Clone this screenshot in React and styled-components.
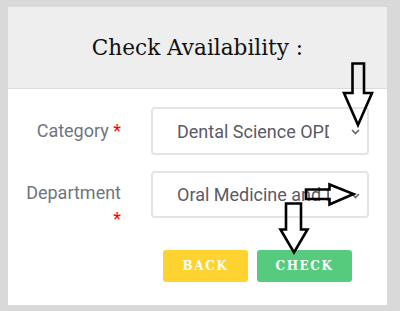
import React from 'react';
import styled, { createGlobalStyle } from 'styled-components';

const GlobalStyle = createGlobalStyle`
  html, body {
    margin: 0;
    padding: 0;
    background: #d9d9d9;
  }
  body {
    width: 400px;
    height: 311px;
    overflow: hidden;
    font-family: Roboto, 'Liberation Sans', sans-serif;
  }
`;

const Page = styled.div`
  position: relative;
  width: 400px;
  height: 311px;
  padding: 7px 0 0 8px;
  box-sizing: border-box;
`;

const Card = styled.div`
  width: 379px;
  height: 298px;
  background: #fff;
  display: flex;
  flex-direction: column;
`;

const Header = styled.div`
  flex-shrink: 0;
  height: 81px;
  background: #eeeeee;
  border-bottom: 1px solid #dcdcdc;
  display: flex;
  align-items: center;
  justify-content: center;
`;

const Title = styled.h3`
  margin: 0;
  font-family: 'DejaVu Serif', 'Liberation Serif', serif;
  font-weight: 400;
  font-size: 21.6px;
  color: #111;
`;

const Body = styled.div`
  padding: 18px 18px 22px 15px;
  display: grid;
  grid-template-columns: 98px 218px;
  grid-template-rows: 48px 47px auto;
  column-gap: 30px;
  row-gap: 16px;
`;

const Label = styled.label`
  padding-top: ${(p) => p.$top}px;
  text-align: right;
  font-size: 18px;
  line-height: 26px;
  color: #70757e;
`;

const Star = styled.span`
  color: #ff0000;
`;

const Select = styled.div`
  position: relative;
  height: ${(p) => p.$height}px;
  box-sizing: border-box;
  border: 2px solid #e4e4e4;
  border-radius: 4px;
  padding: 0 38px 0 24px;
  display: flex;
  align-items: center;
  overflow: hidden;
`;

const Value = styled.span`
  font-size: 18px;
  color: #5a5a66;
  white-space: nowrap;
  overflow: hidden;
`;

const Chevron = styled.svg`
  position: absolute;
  right: 7px;
  top: 50%;
  margin-top: -2px;
`;

const Actions = styled.div`
  grid-column: 2;
  margin-top: 16px;
  padding-left: 12px;
  display: flex;
  gap: 9px;
`;

const Button = styled.button`
  width: ${(p) => p.$width}px;
  height: 32px;
  border: none;
  border-radius: 3px;
  background: ${(p) => p.$bg};
  color: #fff;
  font-family: 'DejaVu Serif', 'Liberation Serif', serif;
  font-weight: 700;
  font-size: 12px;
  letter-spacing: 1.6px;
  padding: 0;
  cursor: pointer;
`;

const Overlay = styled.svg`
  position: absolute;
  left: 0;
  top: 0;
  pointer-events: none;
`;

const Arrow = styled.polygon`
  fill: none;
  stroke: #000;
  stroke-width: 2.6;
  stroke-linejoin: miter;
`;

const Caret = () => (
  <Chevron width="9" height="6" viewBox="0 0 9 6">
    <path d="M1 1l3.5 3.5L8 1" fill="none" stroke="#666" strokeWidth="1.6" />
  </Chevron>
);

export default function App() {
  return (
    <>
      <GlobalStyle />
      <Page>
        <Card>
          <Header>
            <Title>Check Availability :</Title>
          </Header>
          <Body>
            <Label $top={11}>
              Category <Star>*</Star>
            </Label>
            <Select $height={48}>
              <Value>Dental Science OPD</Value>
              <Caret />
            </Select>
            <Label $top={9}>
              Department <Star>*</Star>
            </Label>
            <Select $height={47}>
              <Value>Oral Medicine and Radiology</Value>
              <Caret />
            </Select>
            <Actions>
              <Button $width={85} $bg="#fed330">BACK</Button>
              <Button $width={95} $bg="#56cb7e">CHECK</Button>
            </Actions>
          </Body>
        </Card>
        <Overlay width="400" height="311" viewBox="0 0 400 311">
          <Arrow points="352.5,63.5 364,63.5 364,93 372,93 358,125 344,93 352.5,93" />
          <Arrow points="306,189.5 329.5,189.5 329.5,184.5 353.5,194 329.5,204.5 329.5,199 306,199" />
          <Arrow points="286,203.5 301,203.5 301,229.5 307.5,229.5 294,252.5 280.5,229.5 286,229.5" />
        </Overlay>
      </Page>
    </>
  );
}
